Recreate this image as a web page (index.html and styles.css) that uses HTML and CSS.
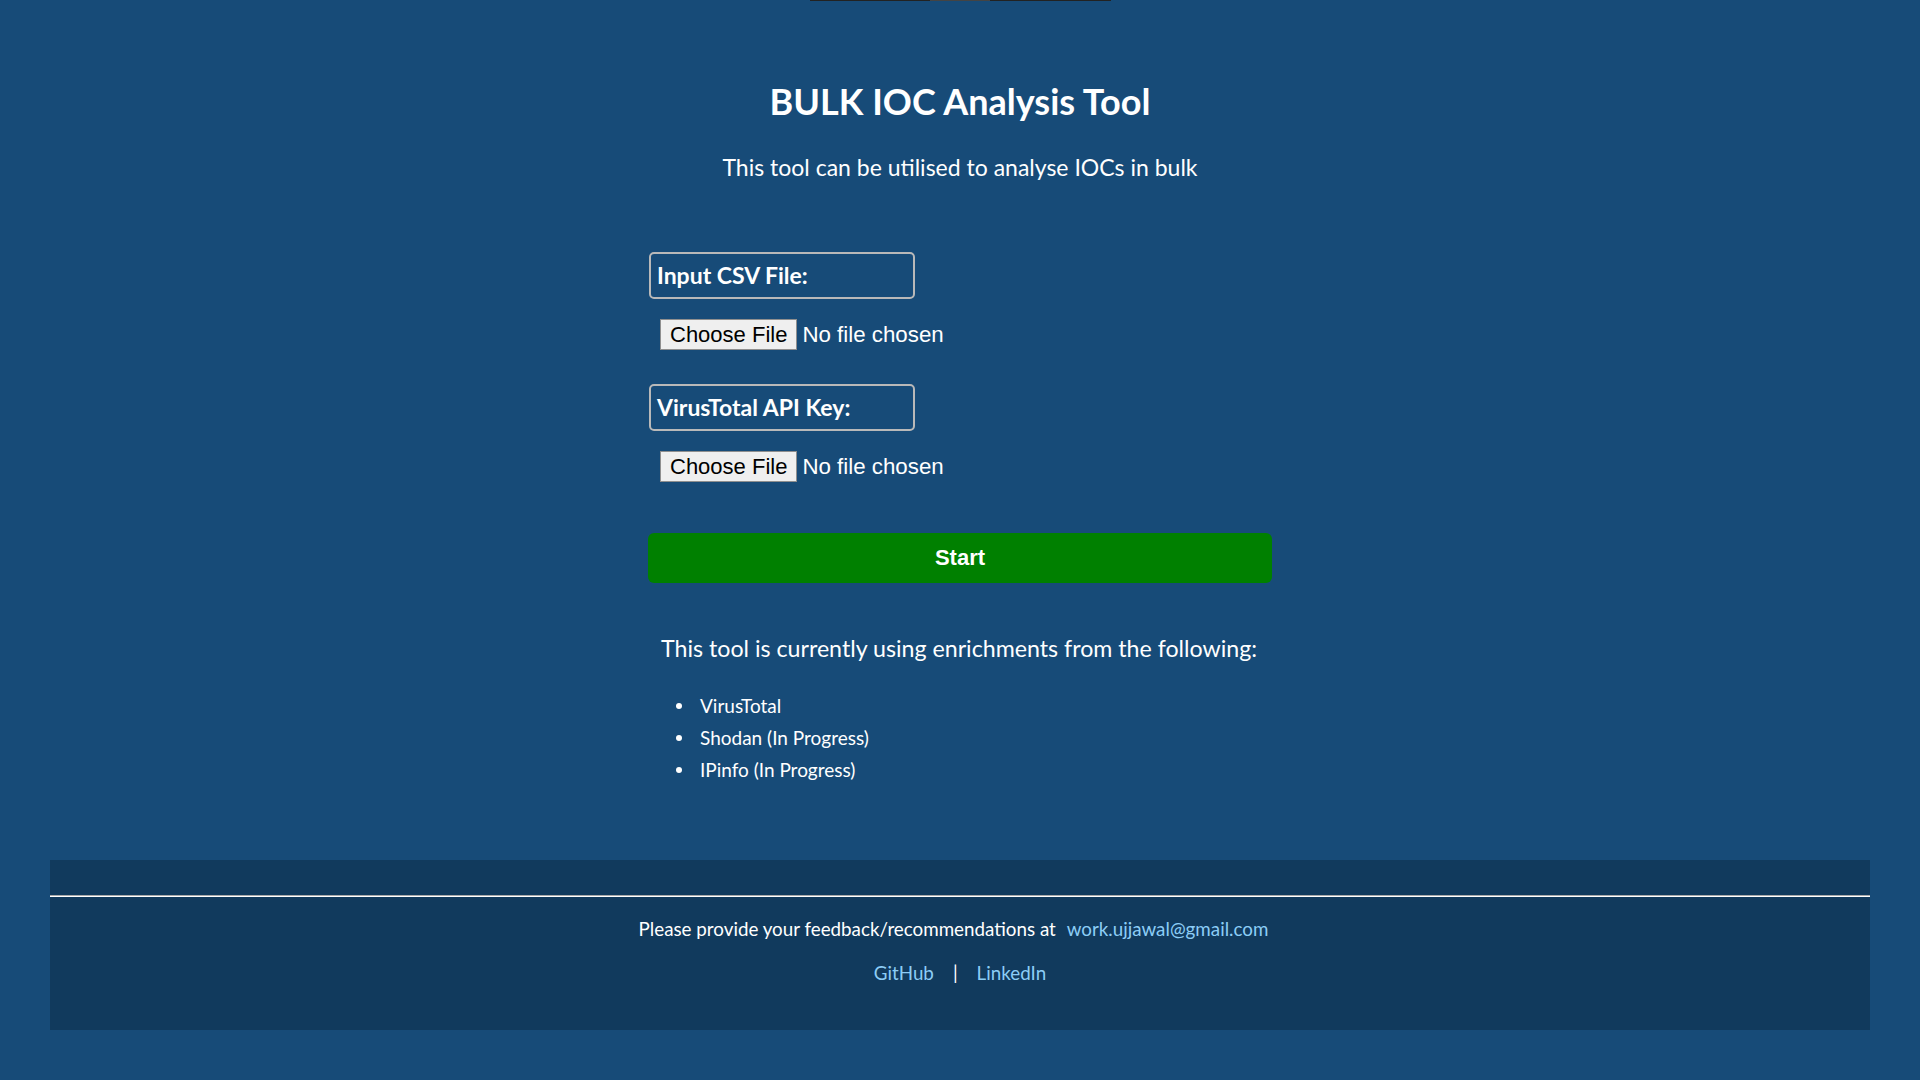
FILE: index.html
```html
<!DOCTYPE html>
<html lang="en">
<head>
<meta charset="utf-8">
<title>BULK IOC Analysis Tool</title>
<link rel="stylesheet" href="styles.css">
</head>
<body>
<div class="topbar"><span class="topbar-thumb"></span></div>
<main class="container">
  <h1 class="title">BULK IOC Analysis Tool</h1>
  <p class="subtitle">This tool can be utilised to analyse IOCs in bulk</p>
  <form class="form">
    <label class="field-label" for="csv">Input CSV File:</label>
    <input class="file-input" type="file" id="csv">
    <label class="field-label" for="apikey">VirusTotal API Key:</label>
    <input class="file-input" type="file" id="apikey">
    <button class="start" type="button">Start</button>
  </form>
  <section class="sources">
    <p class="sources-heading">This tool is currently using enrichments from the following:</p>
    <ul class="sources-list">
      <li>VirusTotal</li>
      <li>Shodan (In Progress)</li>
      <li>IPinfo (In Progress)</li>
    </ul>
  </section>
</main>
<footer class="footer">
  <hr class="footer-rule">
  <p class="footer-line footer-feedback">Please provide your feedback/recommendations at <a class="link email" href="#">work.ujjawal@gmail.com</a></p>
  <p class="footer-line"><a class="link" href="#">GitHub</a><span class="sep">|</span><a class="link" href="#">LinkedIn</a></p>
</footer>
</body>
</html>
```
FILE: styles.css
```css
html, body {
  margin: 0;
  padding: 0;
}
body {
  background: #174b78;
  color: #ffffff;
  font-family: Lato, "Open Sans", sans-serif;
  height: 1080px;
  overflow: hidden;
}
.topbar {
  width: 301px;
  height: 1px;
  margin: 0 auto;
  background: #222222;
  display: flex;
  justify-content: center;
}
.topbar-thumb {
  width: 60px;
  height: 1px;
  background: #444444;
}
.container {
  width: 624px;
  margin: 0 auto;
}
.title {
  margin: 80px -200px 0;
  text-align: center;
  font-size: 36px;
  line-height: 40px;
  font-weight: 700;
}
.subtitle {
  margin: 32px -200px 0;
  text-align: center;
  font-size: 23px;
  line-height: 28px;
}
.form {
  margin-top: 71px;
  display: flex;
  flex-direction: column;
  align-items: flex-start;
}
.field-label {
  box-sizing: border-box;
  width: 266px;
  height: 47px;
  margin-left: 1px;
  padding: 0 6px;
  border: 2px solid #b9b9b9;
  border-radius: 5px;
  font-size: 23px;
  font-weight: 700;
  line-height: 43px;
}
.file-input {
  margin: 20px 0 34px 12px;
  height: 31px;
  font-family: "Liberation Sans", Arial, sans-serif;
  font-size: 22.3px;
  color: #ffffff;
  padding: 0;
}
.file-input:last-of-type {
  margin-bottom: 51px;
}
.file-input::file-selector-button {
  box-sizing: border-box;
  height: 31px;
  margin: 0 5px 0 0;
  padding: 0 9px;
  font-family: "Liberation Sans", Arial, sans-serif;
  font-size: 22px;
  color: #000000;
  background: #efefef;
  border: 1px solid #8f8f8f;
  border-radius: 0;
}
.start {
  width: 624px;
  height: 50px;
  border: none;
  border-radius: 6px;
  background: #008000;
  color: #ffffff;
  font-family: "Liberation Sans", Arial, sans-serif;
  font-size: 22px;
  font-weight: 700;
  padding: 0;
}
.sources {
  padding-left: 13px;
}
.sources-heading {
  margin: 51px -100px 0 0;
  font-size: 23.2px;
  line-height: 28px;
}
.sources-list {
  margin: 28px 0 0;
  padding-left: 15px;
  list-style: none;
  font-size: 19px;
  line-height: 32px;
}
.sources-list li {
  display: flex;
  align-items: center;
}
.sources-list li::before {
  content: "";
  width: 6px;
  height: 6px;
  border-radius: 50%;
  background: #ffffff;
  margin: 0 18px 0 0;
}
.footer {
  margin: 74px 50px 0;
  padding: 35px 0 45px;
  background: #113a5d;
  text-align: center;
  font-size: 18.8px;
}
.footer-rule {
  margin: 0;
  height: 0;
  border: none;
  border-top: 1px solid #a9a9a9;
  border-bottom: 1px solid #ffffff;
}
.footer-line {
  margin: 20px 0 0;
  line-height: 24px;
}
.footer-feedback {
  padding-right: 13px;
}
.link {
  color: #8ccdf6;
  text-decoration: none;
}
.email {
  margin-left: 6px;
}
.sep {
  margin: 0 19px;
  color: #ffffff;
}
```
